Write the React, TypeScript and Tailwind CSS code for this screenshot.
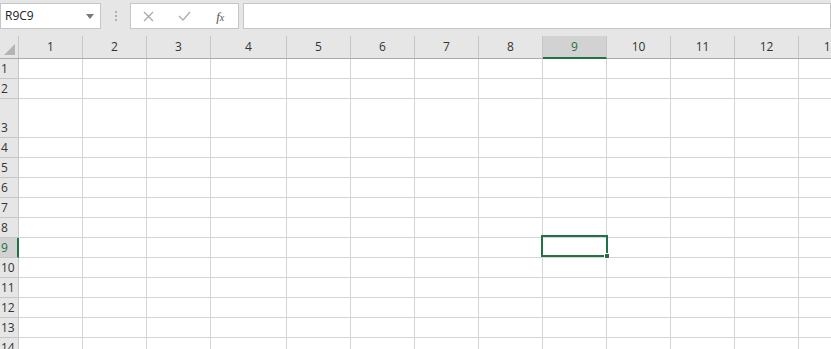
import React from "react";

const colWidths = [64, 64, 64, 76, 64, 64, 64, 64, 64, 64, 64, 64, 64];
const rowHeights = [20, 20, 39, 20, 20, 20, 20, 20, 20, 20, 20, 20, 20, 20, 20];
const SEL_COL = 9;
const SEL_ROW = 9;

export default function App() {
  const gridCols = `19px ${colWidths.map((w) => w + "px").join(" ")}`;
  return (
    <div
      className="w-[831px] h-[349px] overflow-hidden bg-white relative"
      style={{ fontFamily: '"Open Sans", "Liberation Sans", sans-serif' }}
    >
      {/* Formula bar */}
      <div className="h-[36px] bg-[#e6e6e6] flex items-start pt-[3px]">
        <div className="w-[101px] h-[26px] bg-white border border-[#c6c6c6] flex items-center justify-between pl-[4px] pr-[6px]">
          <span className="text-[12px] text-[#222]">R9C9</span>
          <svg width="8" height="5" viewBox="0 0 8 5">
            <path d="M0 0 L8 0 L4 5 Z" fill="#7a7a7a" />
          </svg>
        </div>
        <div className="w-[29px] h-[26px] flex flex-col items-center justify-center gap-[2px]">
          <div className="w-[2px] h-[2px] bg-[#b0b0b0]" />
          <div className="w-[2px] h-[2px] bg-[#b0b0b0]" />
          <div className="w-[2px] h-[2px] bg-[#b0b0b0]" />
        </div>
        <div className="w-[109px] h-[26px] bg-white border border-[#c6c6c6] flex items-center">
          <div className="w-[36px] flex justify-center">
            <svg width="11" height="11" viewBox="0 0 11 11">
              <path d="M1 1 L10 10 M10 1 L1 10" stroke="#a8a8a8" strokeWidth="1.2" />
            </svg>
          </div>
          <div className="w-[36px] flex justify-center">
            <svg width="13" height="10" viewBox="0 0 13 10">
              <path d="M1 5 L5 9 L12 1" stroke="#b0b0b0" strokeWidth="1.4" fill="none" />
            </svg>
          </div>
          <div className="w-[36px] flex justify-center">
            <span
              className="text-[13px] italic text-[#555] leading-none"
              style={{ fontFamily: '"Liberation Serif", serif' }}
            >
              f<span className="text-[10px]">x</span>
            </span>
          </div>
        </div>
        <div className="ml-[4px] flex-1 h-[26px] bg-white border border-[#c6c6c6]" />
      </div>

      {/* Column header */}
      <div
        className="grid h-[23px] bg-[#e6e6e6] border-b border-[#ababab]"
        style={{ gridTemplateColumns: gridCols }}
      >
        <div className="border-r border-[#c6c6c6] relative">
          <svg className="absolute right-[3px] bottom-[3px]" width="11" height="11" viewBox="0 0 11 11">
            <path d="M11 0 L11 11 L0 11 Z" fill="#b4b4b4" />
          </svg>
        </div>
        {colWidths.map((_, i) => {
          const n = i + 1;
          const sel = n === SEL_COL;
          return (
            <div
              key={n}
              className={
                sel
                  ? "bg-[#d2d2d2] border-r border-[#c6c6c6] border-b-2 border-b-[#217346] flex items-center justify-center text-[12px] text-[#217346] -mb-[1px]"
                  : "border-r border-[#c6c6c6] flex items-center justify-center text-[12px] text-[#333]"
              }
            >
              {n}
            </div>
          );
        })}
      </div>

      {/* Rows */}
      {rowHeights.map((h, r) => {
        const n = r + 1;
        const selRow = n === SEL_ROW;
        return (
          <div key={n} className="grid" style={{ gridTemplateColumns: gridCols, height: h }}>
            <div
              className={
                selRow
                  ? "bg-[#d2d2d2] border-r-2 border-r-[#217346] border-b border-[#c6c6c6] flex items-end pl-[1px] text-[12px] leading-[18px] text-[#217346]"
                  : "bg-[#e6e6e6] border-r border-[#ababab] border-b border-[#c6c6c6] flex items-end pl-[1px] text-[12px] leading-[18px] text-[#333]"
              }
            >
              {n}
            </div>
            {colWidths.map((_, c) => (
              <div key={c} className="border-r border-b border-[#d4d4d4]" />
            ))}
          </div>
        );
      })}

      {/* Selection box */}
      <div className="absolute left-[541px] top-[235px] w-[67px] h-[22px] border-2 border-[#217346]" />
      <div className="absolute left-[604px] top-[253px] w-[6px] h-[6px] bg-[#217346] border border-white" />
    </div>
  );
}
